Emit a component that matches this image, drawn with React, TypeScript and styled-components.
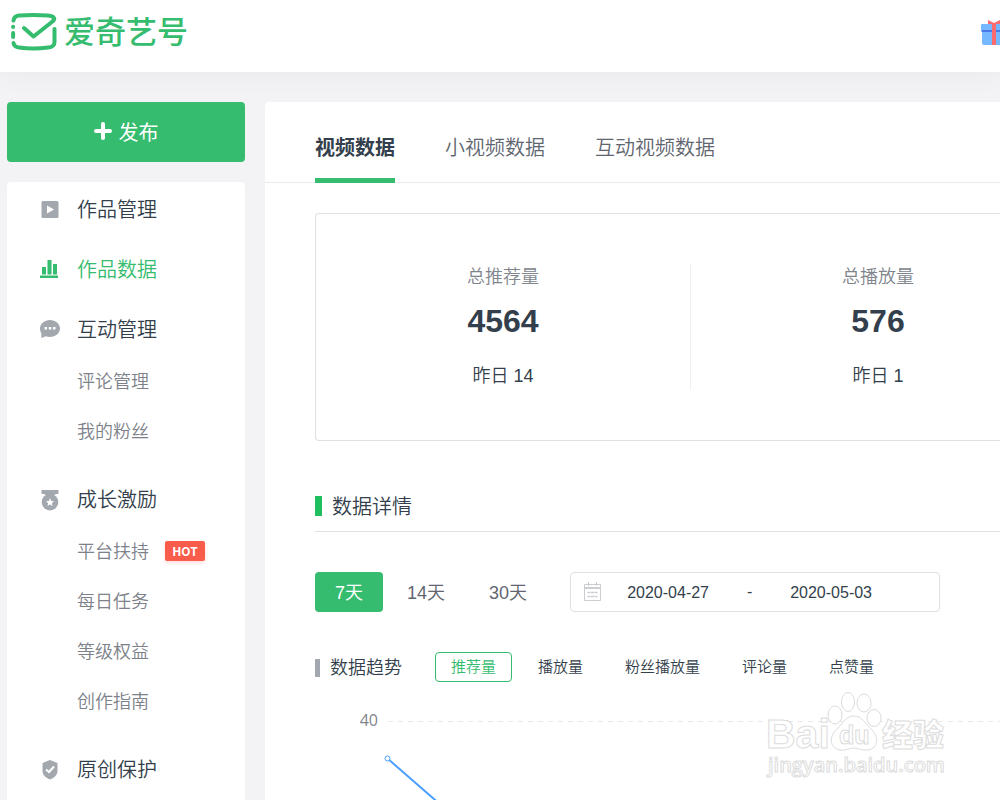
import React from "react";
import styled, { createGlobalStyle } from "styled-components";

const green = "#35bc6f";
const ink = "#333f4c";
const gray = "#a3a8af";

const GlobalStyle = createGlobalStyle`
  * { box-sizing: border-box; }
  body {
    margin: 0;
    background: #f3f3f5;
    color: ${ink};
    font-family: "Liberation Sans", "Noto Sans CJK SC", sans-serif;
    font-weight: 350;
  }
  button, input { font: inherit; color: inherit; margin: 0; padding: 0; border: 0; background: none; }
  a { color: inherit; text-decoration: none; }
`;

const Page = styled.div`
  height: 100vh;
  display: flex;
  flex-direction: column;
  overflow: hidden;
`;

const Header = styled.header`
  flex: none;
  height: 72px;
  background: #fff;
  box-shadow: 0 0 30px rgba(0, 0, 0, 0.05);
  display: flex;
  align-items: flex-start;
  justify-content: space-between;
  padding: 12px 0 0 10px;
`;

const Brand = styled.a`
  display: flex;
  align-items: flex-start;
  gap: 7px;
  height: 40px;
  color: ${green};
  font-size: 31px;
  line-height: 36px;
  font-weight: 500;
  font-family: "Noto Sans CJK SC", sans-serif;
`;

const GiftLink = styled.a`
  margin: 7px -7px 0 0;
  svg { display: block; }
`;

const Body = styled.div`
  flex: 1;
  min-height: 0;
  display: flex;
  align-items: flex-start;
  gap: 20px;
  padding: 30px 0 0 7px;
`;

const Sidebar = styled.aside`
  flex: none;
  width: 238px;
`;

const Publish = styled.button`
  width: 100%;
  height: 60px;
  padding-bottom: 2px;
  border-radius: 4px;
  background: ${green};
  color: #fff;
  font-size: 20px;
  font-weight: 400;
  display: flex;
  align-items: center;
  justify-content: center;
  gap: 7px;
`;

const Menu = styled.nav`
  margin-top: 20px;
  background: #fff;
  border-radius: 4px;
  min-height: 700px;
`;

const Group = styled.div<{ $open?: boolean }>`
  margin-bottom: ${(p) => (p.$open ? 16 : 6)}px;
`;

const MenuItem = styled.a<{ $active?: boolean }>`
  height: 54px;
  padding: 0 0 2px 32px;
  display: flex;
  align-items: center;
  gap: 16px;
  font-size: 20px;
  color: ${(p) => (p.$active ? green : ink)};
  svg { flex: none; margin-top: 4px; }
`;

const SubItem = styled.a`
  height: 50px;
  padding: 0 0 3px 70px;
  display: flex;
  align-items: center;
  gap: 16px;
  font-size: 18px;
  color: #7d828a;
`;

const Hot = styled.span`
  width: 40px;
  height: 20px;
  margin-top: 3px;
  border-radius: 2px;
  background: #fa5c4b;
  box-shadow: 0 2px 4px rgba(250, 92, 75, 0.2);
  color: #fff;
  text-align: center;
  font: 700 12px/20px "Noto Sans CJK SC", sans-serif;
`;

const Main = styled.main`
  position: relative;
  flex: 1;
  min-width: 0;
  height: 100%;
  background: #fff;
  overflow: hidden;
  border-top-left-radius: 4px;
`;

const Tabs = styled.div`
  height: 81px;
  border-bottom: 1px solid #e9eaec;
  padding-left: 50px;
  display: flex;
  gap: 50px;
`;

const Tab = styled.button<{ $active?: boolean }>`
  height: 81px;
  padding-top: 12px;
  border-bottom: 5px solid ${(p) => (p.$active ? green : "transparent")};
  font-size: 20px;
  font-weight: ${(p) => (p.$active ? 700 : 350)};
  color: ${(p) => (p.$active ? ink : "#5f6670")};
`;

const Content = styled.div`
  padding: 30px 0 0 50px;
`;

const Stats = styled.section`
  height: 228px;
  border: 1px solid #dfe0e4;
  border-right: 0;
  border-radius: 4px 0 0 4px;
  padding-top: 50px;
  display: flex;
  overflow: hidden;
`;

const Stat = styled.div`
  flex: 0 0 375px;
  height: 126px;
  border-right: 1px solid #f0f0f2;
  display: flex;
  flex-direction: column;
  align-items: center;
  font-size: 18px;
  line-height: 26px;
`;

const StatLabel = styled.span`
  color: #80858d;
`;

const StatValue = styled.strong`
  margin: 12px 0 23px;
  font-size: 32px;
  line-height: 38px;
  font-weight: 700;
`;

const SectionTitle = styled.h2`
  margin: 44px 0 0;
  height: 47px;
  padding-bottom: 6px;
  border-bottom: 1px solid #dfe0e4;
  display: flex;
  align-items: center;
  gap: 10px;
  font-size: 20px;
  font-weight: 350;
  &::before { content: ""; width: 7px; height: 20px; margin-top: 1px; background: #1fbf5f; }
`;

const Filters = styled.div`
  margin-top: 40px;
  display: flex;
  gap: 4px;
`;

const Range = styled.button<{ $active?: boolean }>`
  height: 40px;
  padding: 0 20px 3px;
  border-radius: 4px;
  font-size: 18px;
  color: ${(p) => (p.$active ? "#fff" : "#5f6670")};
  background: ${(p) => (p.$active ? green : "transparent")};
  font-weight: ${(p) => (p.$active ? 400 : 350)};
`;

const DateBox = styled.div`
  margin-left: 19px;
  width: 370px;
  height: 40px;
  border: 1px solid #dfe0e4;
  border-radius: 4px;
  display: flex;
  align-items: center;
  padding-left: 12px;
  font-size: 16px;
`;

const DateInput = styled.input`
  width: 122px;
  height: 38px;
  padding-top: 2px;
  text-align: center;
  outline: none;
`;

const Dash = styled.span`
  width: 41px;
  text-align: center;
`;

const DateStart = styled(DateInput)`
  margin-left: 4px;
`;

const Trend = styled.div`
  margin-top: 40px;
  height: 30px;
  display: flex;
  align-items: center;
`;

const TrendTitle = styled.h3`
  margin: 0;
  width: 120px;
  padding-bottom: 2px;
  display: flex;
  align-items: center;
  gap: 10px;
  font-size: 18px;
  font-weight: 350;
  &::before { content: ""; width: 5px; height: 18px; margin-top: 4px; background: ${gray}; }
`;

const Metrics = styled.div`
  display: flex;
  gap: 10px;
`;

const Metric = styled.button<{ $active?: boolean }>`
  height: 30px;
  padding: 0 15px 4px;
  border: 1px solid ${(p) => (p.$active ? green : "transparent")};
  border-radius: 4px;
  font-size: 15px;
  color: ${(p) => (p.$active ? green : ink)};
`;

const Chart = styled.svg`
  display: block;
  width: 100%;
  height: 240px;
`;

const Watermark = styled.svg`
  position: absolute;
  right: 50px;
  bottom: 18px;
`;

const LogoMark = () => (
  <svg width="47" height="40" viewBox="0 0 47 40" fill="none" stroke={green} strokeWidth="4" strokeLinecap="round" strokeLinejoin="round" aria-hidden="true">
    <path d="M3.500 8.500C4 5 6 4 9 3.600C18 2.800 29 2.800 38 3.600C44 4.200 46 6.500 42.500 9.500L23.500 24.500L14 16" />
    <path d="M44.500 17V30C44.500 34 42 35 38 35.500C29 36.600 18 36.600 9 35.500C5.500 35 4 34 3.500 31" />
    <path d="M3.100 15V14.800" />
    <path d="M3.100 21V25" />
  </svg>
);

const Gift = () => (
  <svg width="26" height="27" viewBox="0 0 26 27" aria-hidden="true">
    <rect x="0" y="5" width="26" height="8" rx="1" fill="#76b8ff" />
    <rect x="1" y="12" width="24" height="14" rx="2" fill="#76b8ff" />
    <rect x="1" y="11" width="24" height="2" fill="#4a78ec" />
    <rect x="11" y="4" width="4" height="22" fill="#fb6a6d" />
    <path d="M7 5V1L13 4L19 1V5Z" fill="#fb6a6d" />
  </svg>
);

const PlusIcon = () => (
  <svg width="18" height="18" viewBox="0 0 18 18" stroke="#fff" strokeWidth="4" strokeLinecap="round" aria-hidden="true">
    <path d="M9 2V16M2 9H16" />
  </svg>
);

const icons = {
  play: (
    <>
      <rect x="2.500" y="2" width="17" height="17" rx="1.500" fill={gray} />
      <path d="M8 6.500L15 10.500L8 14.500Z" fill="#fff" />
    </>
  ),
  bars: <path d="M3 8H7V15.500H3ZM8.500 1H12.500V15.500H8.500ZM14 5H18V15.500H14ZM1 16.500H19V19H1Z" fill={green} />,
  chat: (
    <>
      <path d="M11 1C16.500 1 21 4.800 21 9.500S16.500 18 11 18C9.400 18 8 17.700 6.800 17.200L2.300 19V14.300C1.500 12.900 1 11.300 1 9.500C1 4.800 5.500 1 11 1Z" fill={gray} />
      <path d="M5.500 8h2.500v2.500H5.500ZM9.800 8h2.500v2.500H9.800ZM14 8h2.500v2.500H14Z" fill="#fff" />
    </>
  ),
  medal: (
    <>
      <path d="M2.500 1H19.500V4Q19.500 5 18.500 5H3.500Q2.500 5 2.500 4ZM5 5L8 7H14L17 5Z" fill={gray} />
      <circle cx="11" cy="13.200" r="8.300" fill={gray} />
      <path d="M11 9L12.200 11.900L15 12.200L12.900 14.200L13.500 17L11 15.500L8.500 17L9.100 14.200L7 12.200L9.800 11.900Z" fill="#fff" />
    </>
  ),
  shield: (
    <>
      <path d="M11 1L18.500 4V11.500C18.500 16 15.500 18.800 11 20.500C6.500 18.800 3.500 16 3.500 11.500V4Z" fill={gray} />
      <path d="M7 10.500L10 13L15 7.500" fill="none" stroke="#fff" strokeWidth="2" />
    </>
  ),
};

const MenuIcon = ({ name }: { name: keyof typeof icons }) => (
  <svg width="22" height="22" viewBox="0 0 22 22" aria-hidden="true">
    {icons[name]}
  </svg>
);

const CalendarIcon = () => (
  <svg width="20" height="20" viewBox="0 0 20 20" fill="none" stroke="#cbcdd1" aria-hidden="true">
    <path d="M1.500 2.500H17.500V18.500H1.500Z" />
    <path d="M5.500 0V4M13.500 0V4M1 5.500H18M1 6.500H18" />
    <path d="M4.500 10.500H7.500M8 10.500H11M11.500 10.500H14.500M4.500 14.500H7.500M8 14.500H11M11.500 14.500H14.500" strokeWidth="1.500" />
  </svg>
);

const menu: { icon: keyof typeof icons; label: string; active?: boolean; children?: string[] }[] = [
  { icon: "play", label: "作品管理" },
  { icon: "bars", label: "作品数据", active: true },
  { icon: "chat", label: "互动管理", children: ["评论管理", "我的粉丝"] },
  { icon: "medal", label: "成长激励", children: ["平台扶持", "每日任务", "等级权益", "创作指南"] },
  { icon: "shield", label: "原创保护" },
];

const stats = [
  { label: "总推荐量", value: "4564", yesterday: "昨日 14" },
  { label: "总播放量", value: "576", yesterday: "昨日 1" },
];

export default function App() {
  return (
    <Page>
      <GlobalStyle />
      <Header>
        <Brand href="#">
          <LogoMark />
          爱奇艺号
        </Brand>
        <GiftLink href="#" aria-label="gift">
          <Gift />
        </GiftLink>
      </Header>
      <Body>
        <Sidebar>
          <Publish type="button">
            <PlusIcon />
            发布
          </Publish>
          <Menu>
            {menu.map((m) => (
              <Group key={m.label} $open={!!m.children}>
                <MenuItem href="#" $active={m.active}>
                  <MenuIcon name={m.icon} />
                  {m.label}
                </MenuItem>
                {m.children?.map((c) => (
                  <SubItem href="#" key={c}>
                    {c}
                    {c === "平台扶持" && <Hot>HOT</Hot>}
                  </SubItem>
                ))}
              </Group>
            ))}
          </Menu>
        </Sidebar>
        <Main>
          <Tabs>
            <Tab type="button" $active>视频数据</Tab>
            <Tab type="button">小视频数据</Tab>
            <Tab type="button">互动视频数据</Tab>
          </Tabs>
          <Content>
            <Stats>
              {stats.map((s) => (
                <Stat key={s.label}>
                  <StatLabel>{s.label}</StatLabel>
                  <StatValue>{s.value}</StatValue>
                  <span>{s.yesterday}</span>
                </Stat>
              ))}
            </Stats>
            <SectionTitle>数据详情</SectionTitle>
            <Filters>
              <Range type="button" $active>7天</Range>
              <Range type="button">14天</Range>
              <Range type="button">30天</Range>
              <DateBox>
                <CalendarIcon />
                <DateStart aria-label="start date" defaultValue="2020-04-27" />
                <Dash>-</Dash>
                <DateInput aria-label="end date" defaultValue="2020-05-03" />
              </DateBox>
            </Filters>
            <Trend>
              <TrendTitle>数据趋势</TrendTitle>
              <Metrics>
                <Metric type="button" $active>推荐量</Metric>
                <Metric type="button">播放量</Metric>
                <Metric type="button">粉丝播放量</Metric>
                <Metric type="button">评论量</Metric>
                <Metric type="button">点赞量</Metric>
              </Metrics>
            </Trend>
            <Chart>
              <text x="63" y="44" textAnchor="end" fontFamily="Open Sans" fontSize="16" fontWeight="400" fill="#80858d">40</text>
              <line x1="73" y1="39.500" x2="100%" y2="39.500" stroke="#e9e9eb" strokeDasharray="5 5" />
              <path d="M72.500 76.500L290 266" stroke="#4a9fff" strokeWidth="2" />
              <circle cx="72.500" cy="76.500" r="2.500" fill="#fff" stroke="#4a9fff" />
            </Chart>
          </Content>
          <Watermark width="186" height="92" viewBox="0 0 186 92" fill="#fff" stroke="#dcdcdc" strokeWidth="1" fontFamily="Liberation Sans, Noto Sans CJK SC, sans-serif" aria-hidden="true">
            <text x="2" y="58" fontSize="41" fontWeight="700">Bai</text>
            <ellipse cx="71" cy="25" rx="7" ry="9" />
            <ellipse cx="84" cy="12" rx="6.500" ry="9.500" />
            <ellipse cx="100" cy="13" rx="7" ry="9" />
            <ellipse cx="110" cy="28" rx="7" ry="8.500" />
            <path d="M90 26C98 26 101 33 107 39C115 46 115 58 104 60C98 61 95 58 90 58C85 58 82 61 76 60C65 58 65 46 73 39C79 33 82 26 90 26Z" />
            <text x="75" y="54" fontSize="25" fontWeight="700">du</text>
            <text x="118" y="56" fontSize="31" fontWeight="900">经验</text>
            <text x="4" y="82" fontSize="20" fontFamily="Open Sans" fontWeight="600">jingyan.baidu.com</text>
          </Watermark>
        </Main>
      </Body>
    </Page>
  );
}
